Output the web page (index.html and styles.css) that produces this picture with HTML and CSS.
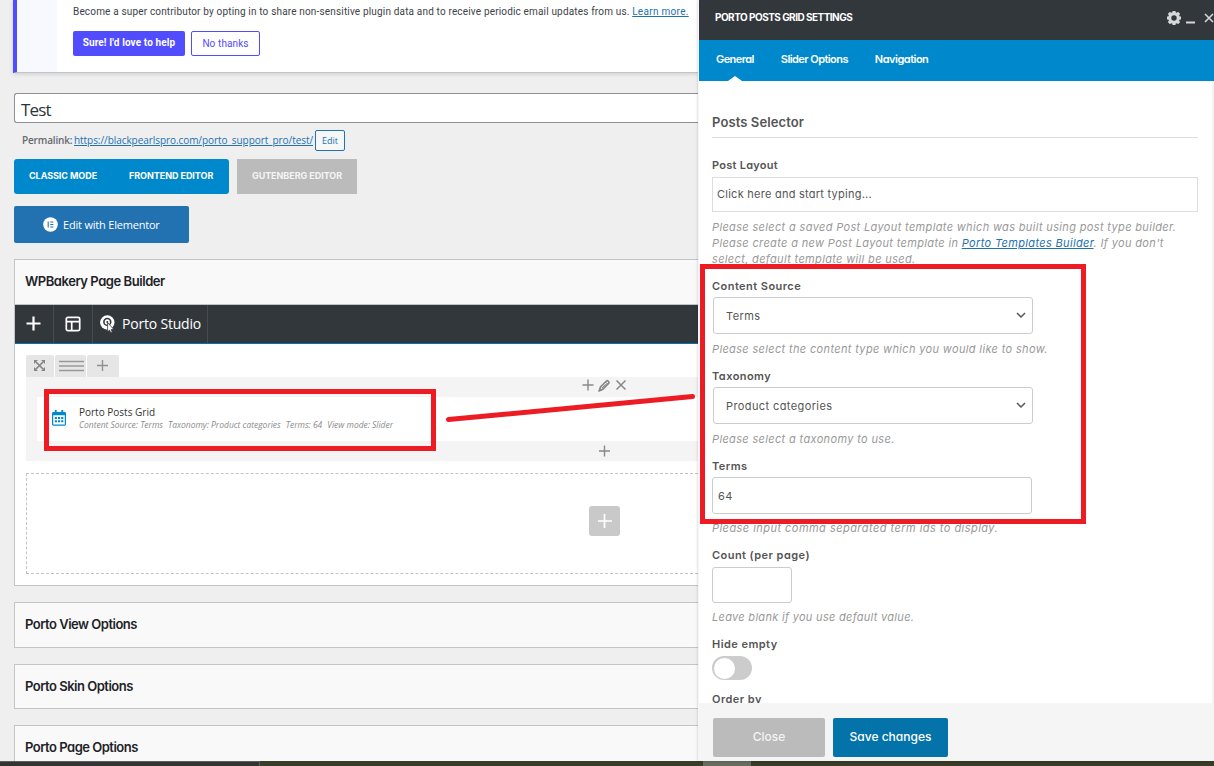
FILE: index.html
```html
<!DOCTYPE html>
<html lang="en">
<head>
    <meta charset="UTF-8">
    <meta name="viewport" content="width=device-width, initial-scale=1.0">
    <title>Edit Page - Test</title>
    <link rel="stylesheet" href="styles.css">
</head>
<body>
    <div class="screen">
        <div class="workspace">
            <main class="editor">
                <div class="notice">
                    <div class="notice-aside"></div>
                    <div class="notice-content">
                        <p>Become a super contributor by opting in to share non-sensitive plugin data and to receive periodic email updates from us. <a href="#">Learn more.</a></p>
                        <div class="notice-actions">
                            <button class="btn-help">Sure! I'd love to help</button>
                            <button class="btn-no">No thanks</button>
                        </div>
                    </div>
                </div>

                <div class="title-field">Test</div>

                <div class="permalink">
                    <strong>Permalink:</strong>
                    <a href="#">https://blackpearlspro.com/porto_support_pro/test/</a>
                    <button>Edit</button>
                </div>

                <div class="modes">
                    <div class="mode-group">
                        <span>CLASSIC MODE</span>
                        <span>FRONTEND EDITOR</span>
                    </div>
                    <div class="mode-disabled">GUTENBERG EDITOR</div>
                </div>

                <button class="elementor">
                    <svg width="15" height="15" viewBox="0 0 15 15">
                        <circle cx="7.5" cy="7.5" r="7.3" fill="#fff"/>
                        <path d="M5.2 4.5v6M7.2 5h3.2M7.2 7.5h3.2M7.2 10h3.2" stroke="#2271b1" stroke-width="1.1"/>
                    </svg>
                    <span>Edit with Elementor</span>
                </button>

                <section class="postbox builder">
                    <h2>WPBakery Page Builder</h2>
                    <nav class="builder-nav">
                        <a class="nav-item">
                            <svg width="16" height="16" viewBox="0 0 16 16"><path d="M7.5 .5v14M.5 7.5h14" stroke="#fff" stroke-width="2.2"/></svg>
                        </a>
                        <a class="nav-item">
                            <svg width="16" height="16" viewBox="0 0 16 16" fill="none" stroke="#fff" stroke-width="1.7"><rect x="1.3" y="1.3" width="13.4" height="13.4" rx="1.6"/><path d="M1 5.7h14M6.7 5.7v9"/></svg>
                        </a>
                        <a class="nav-item studio">
                            <svg width="16" height="20" viewBox="0 0 16 20">
                                <circle cx="7.3" cy="8.5" r="7.2" fill="#fff"/>
                                <circle cx="7.3" cy="7.9" r="3.4" fill="none" stroke="#32373c" stroke-width="1.6"/>
                                <circle cx="7.3" cy="7.9" r="1" fill="#32373c"/>
                                <path d="M7.6 8.6v9.2l2-1.7 1.1 2.6 1.6-.7-1.1-2.5h2.6z" fill="#fff" stroke="#32373c" stroke-width=".8"/>
                            </svg>
                            <span>Porto Studio</span>
                        </a>
                    </nav>
                    <div class="builder-body">
                        <div class="row-controls">
                            <span class="control move">
                                <svg width="11" height="11" viewBox="0 0 11 11"><path d="M2 2l7 7M9 2L2 9" stroke="#858585" stroke-width="1.7"/><path d="M0 0h4L0 4zM11 0v4L7 0zM0 11V7l4 4zM11 11H7l4-4z" fill="#858585"/></svg>
                            </span>
                            <span class="control layout">
                                <svg width="25" height="12" viewBox="0 0 25 12"><path d="M0 1.5h25M0 6h25M0 10.5h25" stroke="#999" stroke-width="1.3"/></svg>
                            </span>
                            <span class="control add">
                                <svg width="12" height="12" viewBox="0 0 12 12"><path d="M5.5 0v11M0 5.500h11" stroke="#919191" stroke-width="1.400"/></svg>
                            </span>
                        </div>
                        <div class="row">
                            <div class="column-controls">
                                <svg width="12" height="12" viewBox="0 0 12 12"><path d="M6 .5v11M.5 6h11" stroke="#888" stroke-width="1.4"/></svg>
                                <svg width="13" height="13" viewBox="0 0 13 13"><path d="M1.5 11.5l1-3.500 6-6c1-1 3.200 1 2.300 2.200l-6 6z" fill="none" stroke="#888" stroke-width="1.700"/><path d="M7.400 3l2.600 2.600M4 9l3.800-3.800M1 12l.6-2.400 1.800 1.800z" stroke="#888" fill="#888"/></svg>
                                <svg width="12" height="12" viewBox="0 0 12 12"><path d="M1.500 1.500l9 9M10.500 1.500l-9 9" stroke="#888" stroke-width="1.500"/></svg>
                            </div>
                            <div class="element">
                                <svg width="14" height="16" viewBox="0 0 15 17">
                                    <path d="M3 0h2v2h5V0h2v2h1.500A1.500 1.500 0 0 1 15 3.500v11.800a1.500 1.500 0 0 1-1.500 1.500h-12A1.500 1.500 0 0 1 0 15.300V3.500A1.500 1.500 0 0 1 1.500 2H3zM1.300 5.500v9.900h12.400V5.500z" fill="#0088cc" fill-rule="evenodd"/>
                                    <path d="M3 7.500h2.300v2H3zM6.400 7.500h2.300v2H6.400zM9.800 7.500h2.300v2H9.800zM3 11h2.300v2H3zM6.400 11h2.300v2H6.400zM9.800 11h2.300v2H9.800z" fill="#0088cc"/>
                                </svg>
                                <div>
                                    <h4>Porto Posts Grid</h4>
                                    <p class="params"><span>Content Source: Terms</span><span>Taxonomy: Product categories</span><span>Terms: 64</span><span>View mode: Slider</span></p>
                                </div>
                            </div>
                            <div class="column-bottom">
                                <svg width="12" height="12" viewBox="0 0 12 12"><path d="M6.500 .5v11M1 6h11" stroke="#888" stroke-width="1.400"/></svg>
                            </div>
                        </div>
                        <div class="empty-row">
                            <span class="add-element">
                                <svg width="14" height="14" viewBox="0 0 14 14"><path d="M6.500 0v14M0 7h14" stroke="#fff" stroke-width="1.700"/></svg>
                            </span>
                        </div>
                    </div>
                </section>

                <section class="postbox"><h2>Porto View Options</h2></section>
                <section class="postbox skin"><h2>Porto Skin Options</h2></section>
                <section class="postbox"><h2>Porto Page Options</h2></section>
            </main>

            <aside class="panel">
                <header class="panel-header">
                    <h3>PORTO POSTS GRID SETTINGS</h3>
                    <div class="panel-tools">
                        <svg width="14" height="14" viewBox="0 0 15 15"><circle cx="7.500" cy="7.500" r="4.600" fill="none" stroke="#d6d7d8" stroke-width="3.400"/><path d="M7.500 0v3M7.500 12v3M0 7.500h3M12 7.500h3M2 2l2 2M11 11l2 2M13 2l-2 2M4 11l-2 2" stroke="#d6d7d8" stroke-width="3.400"/></svg>
                        <svg class="minimize" width="9" height="15" viewBox="0 0 9 15"><path d="M0 11.500h9" stroke="#d6d7d8" stroke-width="2"/></svg>
                        <svg class="close" width="10" height="10" viewBox="0 0 10 10"><path d="M1 1l8 8M9 1L1 9" stroke="#d6d7d8" stroke-width="1.600"/></svg>
                    </div>
                </header>
                <nav class="tabs">
                    <a class="tab active">General</a>
                    <a class="tab">Slider Options</a>
                    <a class="tab navigation">Navigation</a>
                </nav>
                <div class="panel-body">
                    <h4 class="group-title">Posts Selector</h4>

                    <div class="field post-layout">
                        <label>Post Layout</label>
                        <div class="input wide">Click here and start typing...</div>
                        <p class="help">Please select a saved Post Layout template which was built using post type builder.<br>Please create a new Post Layout template in <a href="#">Porto Templates Builder</a>. If you don't<br>select, default template will be used.</p>
                    </div>

                    <div class="field source">
                        <label>Content Source</label>
                        <div class="input select">Terms<svg width="10" height="7" viewBox="0 0 10 7"><path d="M1 1l4 4 4-4" fill="none" stroke="#555" stroke-width="1.500"/></svg></div>
                        <p class="help">Please select the content type which you would like to show.</p>
                    </div>

                    <div class="field taxonomy">
                        <label>Taxonomy</label>
                        <div class="input select">Product categories<svg width="10" height="7" viewBox="0 0 10 7"><path d="M1 1l4 4 4-4" fill="none" stroke="#555" stroke-width="1.500"/></svg></div>
                        <p class="help">Please select a taxonomy to use.</p>
                    </div>

                    <div class="field terms">
                        <label>Terms</label>
                        <div class="input text">64</div>
                        <p class="help">Please input comma separated term ids to display.</p>
                    </div>

                    <div class="field count">
                        <label>Count (per page)</label>
                        <div class="input small"></div>
                        <p class="help">Leave blank if you use default value.</p>
                    </div>

                    <div class="field hide-empty">
                        <label>Hide empty</label>
                        <div class="toggle"></div>
                    </div>

                    <div class="field">
                        <label>Order by</label>
                    </div>
                </div>
                <footer class="panel-footer">
                    <button class="btn-close">Close</button>
                    <button class="btn-save">Save changes</button>
                </footer>
            </aside>
        </div>
        <div class="taskbar">
            <div class="search"></div>
            <div class="active-app"></div>
        </div>

        <!-- annotations over the page -->
        <svg class="marks" width="1214" height="766" viewBox="0 0 1214 766" fill="none" stroke="#ed1c24" stroke-width="5">
            <rect x="46.500" y="391.500" width="387" height="57"/>
            <rect x="702.500" y="266.500" width="381" height="255"/>
            <path d="M448.500 419.500L692.500 396.500" stroke-linecap="round"/>
        </svg>
    </div>
</body>
</html>
```

FILE: styles.css
```css
* {
    box-sizing: border-box;
}

body {
    margin: 0;
    font-family: "Open Sans", "Noto Sans", sans-serif;
    background: #f0f0f1;
    color: #3c434a;
}

h2, h3, h4, p {
    margin: 0;
}

svg {
    flex: none;
    display: block;
}

button {
    border: none;
    padding: 0;
    font-family: inherit;
}

a {
    color: #2271b1;
}

.screen {
    position: relative;
    width: 1214px;
    height: 766px;
    overflow: hidden;
    white-space: nowrap;
}

.workspace {
    display: flex;
    height: 761px;
}

/* Editor */
.editor {
    width: 698px;
    height: 761px;
    padding-left: 14px;
    overflow: hidden;
    background: #efefef;
}

.notice {
    display: flex;
    height: 73px;
    margin-left: -1px;
    background: #fff;
    border-left: 4px solid #524cff;
    border-bottom: 1px solid #c3c4c7;
    box-shadow: 0 1px 4px rgba(0, 0, 0, 0.15);
    font-family: Roboto, sans-serif;
}

.notice-aside {
    width: 40px;
    background: #f8f9ff;
}

.notice-content {
    padding: 4px 0 0 16px;
}

.notice-content p {
    height: 16px;
    font-size: 10px;
    line-height: 16px;
    letter-spacing: 0.165px;
}

.notice-content a {
    letter-spacing: 0.3px;
}

.notice-actions {
    display: flex;
    gap: 6px;
    margin-top: 11px;
}

.btn-help,
.btn-no {
    height: 25px;
    border-radius: 2px;
    font-size: 10px;
}

.btn-help {
    width: 112px;
    padding-bottom: 2px;
    background: #524cff;
    color: #fff;
    font-weight: 700;
    letter-spacing: 0.12px;
}

.btn-no {
    width: 69px;
    background: #fff;
    border: 1px solid #524cff;
    color: #524cff;
    letter-spacing: 0.1px;
}

.title-field {
    display: flex;
    align-items: center;
    height: 30px;
    margin-top: 20px;
    padding: 2px 0 0 6px;
    background: #fff;
    border: 1px solid #8c8f94;
    border-right: none;
    border-radius: 3px 0 0 3px;
    font-size: 17px;
    letter-spacing: -0.8px;
    color: #2c3338;
}

.permalink {
    display: flex;
    align-items: center;
    height: 21px;
    margin-top: 7px;
    padding-left: 8px;
    font-size: 10px;
    line-height: 14px;
    color: #646970;
}

.permalink strong {
    width: 52px;
    padding-bottom: 2px;
    font-weight: 600;
    letter-spacing: -0.15px;
}

.permalink a {
    width: 241px;
    padding-bottom: 2px;
    letter-spacing: -0.06px;
}

.permalink button {
    width: 30px;
    height: 21px;
    border: 1px solid #2271b1;
    border-radius: 2px;
    background: #f6f7f7;
    color: #2271b1;
    font-size: 9px;
}

.modes {
    display: flex;
    gap: 8px;
    margin-top: 8px;
    font-family: Inter, sans-serif;
    font-size: 9px;
    font-weight: 700;
    letter-spacing: -0.05px;
    color: #fff;
}

.mode-group {
    display: flex;
    align-items: center;
    width: 215px;
    height: 35px;
    padding: 0 0 2px 15px;
    background: #0088cc;
    border-radius: 3px;
}

.mode-group span {
    width: 100px;
}

.mode-disabled {
    display: flex;
    align-items: center;
    justify-content: center;
    width: 120px;
    height: 35px;
    padding-bottom: 2px;
    background: #bbb;
    color: #f4f4f4;
}

.elementor {
    display: flex;
    align-items: center;
    gap: 5px;
    width: 175px;
    height: 37px;
    margin-top: 12px;
    padding-left: 29px;
    background: #2271b1;
    border-radius: 2px;
    color: #fff;
    font-size: 11px;
    letter-spacing: -0.2px;
}

/* Meta boxes */
.postbox {
    height: 46px;
    margin-bottom: 16px;
    background: #f9f9f9;
    border: 1px solid #c3c4c7;
    border-right: none;
}

.postbox.skin {
    height: 45px;
}

.postbox h2 {
    display: flex;
    align-items: center;
    height: 44px;
    padding: 0 0 2px 10px;
    font-family: Inter, sans-serif;
    font-size: 13px;
    font-weight: 600;
    letter-spacing: -0.5px;
    color: #1d2327;
    font-feature-settings: "cv11";
}

.postbox.builder {
    height: 327px;
    margin-top: 16px;
    background: #fff;
}

.postbox.builder h2 {
    height: 45px;
    background: #f9f9f9;
    border-bottom: 1px solid #c3c4c7;
    letter-spacing: -0.45px;
}

.builder-nav {
    display: flex;
    height: 39px;
    background: #32373c;
    border-bottom: 1px solid #0073aa;
}

.nav-item {
    display: flex;
    align-items: center;
    justify-content: center;
    width: 39px;
    border-right: 1px solid #464b50;
    color: #fff;
    font-size: 14px;
}

.nav-item.studio {
    justify-content: flex-start;
    gap: 6px;
    width: 115px;
    padding-left: 7px;
    letter-spacing: -0.2px;
}

.studio span {
    padding-bottom: 2px;
}

.builder-body {
    padding: 11px 0 0 11px;
}

.row-controls {
    display: flex;
    gap: 1px;
    height: 22px;
}

.control {
    display: flex;
    align-items: center;
    justify-content: center;
    width: 28px;
    background: #e6e6e6;
    border-radius: 2px 2px 0 0;
}

.control.move {
    padding: 0 1px 1px 0;
}

.control.layout {
    width: 31px;
    padding: 0 0 1px 2px;
}

.control.add {
    width: 32px;
}

.row {
    height: 84px;
    padding-left: 11px;
    background: #f4f4f4;
}

.column-controls {
    display: flex;
    align-items: center;
    gap: 4px;
    height: 20px;
    padding: 0 0 4px 545px;
}

.element {
    display: flex;
    align-items: center;
    gap: 13px;
    height: 44px;
    padding: 0 0 2px 15px;
    background: #fff;
}

.element h4 {
    height: 13px;
    font-size: 10px;
    line-height: 13px;
    font-weight: 500;
    color: #333;
}

.params {
    display: flex;
    gap: 5px;
    height: 12px;
    font-size: 8.5px;
    line-height: 12px;
    font-style: italic;
    letter-spacing: -0.015px;
    color: #8c8c8c;
}

.column-bottom {
    display: flex;
    align-items: center;
    height: 20px;
    padding-left: 561px;
}

.empty-row {
    display: flex;
    align-items: center;
    height: 101px;
    margin-top: 12px;
    padding: 0 0 6px 562px;
    border: 1px dashed #c4c4c4;
    border-right: none;
}

.add-element {
    display: flex;
    align-items: center;
    justify-content: center;
    width: 31px;
    height: 30px;
    background: #c9c9c9;
    border-radius: 3px;
}

/* Settings panel */
.panel {
    display: flex;
    flex-direction: column;
    width: 516px;
    height: 761px;
    border-left: 1px solid #f5f5f5;
    background: #fff;
    font-family: Inter, sans-serif;
    font-feature-settings: "cv11";
    box-shadow: 0 0 3px rgba(0, 0, 0, 0.2);
    z-index: 1;
}

.panel-header {
    display: flex;
    justify-content: space-between;
    height: 40px;
    padding-left: 16px;
    background: #32373c;
    color: #fff;
}

.panel-header h3 {
    font-size: 10px;
    line-height: 35px;
    font-weight: 700;
    letter-spacing: -0.53px;
}

.panel-tools {
    display: flex;
    align-items: center;
    gap: 5px;
    height: 36px;
}

.panel-tools .close {
    margin-left: 4px;
}

.tabs {
    display: flex;
    gap: 27px;
    height: 41px;
    padding-left: 17px;
    background: #0088cc;
    font-size: 11px;
    font-weight: 600;
    line-height: 38px;
    letter-spacing: -0.57px;
}

.tab {
    color: #fff;
}

.tab.active {
    display: flex;
    flex-direction: column;
    align-items: center;
    height: 41px;
}

.tab.active::after {
    content: "";
    margin-top: -2px;
    border: 7px solid transparent;
    border-top: none;
    border-bottom: 5px solid #fff;
}

.tab.navigation {
    letter-spacing: -0.5px;
}

.panel-body {
    height: 622px;
    padding: 28px 14px 0 13px;
    border-right: 2px solid #f3f3f3;
    overflow: hidden;
    color: #555;
}

.group-title {
    height: 29px;
    margin-bottom: 19px;
    border-bottom: 1px solid #ddd;
    font-size: 13px;
    line-height: 27px;
    font-weight: 600;
    letter-spacing: 0.1px;
}

.field label {
    display: block;
    height: 20px;
    font-size: 11px;
    line-height: 16px;
    font-weight: 600;
    letter-spacing: 0.45px;
}

.field.post-layout {
    height: 121px;
}

.field.post-layout label {
    letter-spacing: 0.25px;
}

.field.source,
.field.taxonomy {
    height: 90px;
}

.field.terms {
    height: 89px;
}

.source label,
.taxonomy label,
.terms label {
    height: 19px;
}

.field.count {
    height: 89px;
}

.field.hide-empty {
    height: 55px;
}

.input {
    display: flex;
    align-items: center;
    height: 37px;
    border: 1px solid #ccc;
    border-radius: 3px;
    font-size: 11px;
    letter-spacing: 0.4px;
    color: #555;
}

.input.wide {
    height: 35px;
    padding: 0 0 2px 4px;
    border-color: #ddd;
    border-radius: 0;
    letter-spacing: 0.25px;
}

.input.select {
    justify-content: space-between;
    width: 320px;
    margin-left: 1px;
    padding: 0 6px 0 12px;
}

.input.text {
    width: 320px;
    padding-left: 5px;
}

.input.small {
    width: 80px;
    height: 36px;
}

.help {
    margin-top: 7px;
    font-size: 11px;
    line-height: 16px;
    font-style: italic;
    letter-spacing: 0.35px;
    color: #999;
}

.text + .help,
.small + .help {
    margin-top: 6px;
}

.terms .help {
    letter-spacing: 0.46px;
}

.count .help {
    letter-spacing: 0.3px;
}

.toggle {
    display: flex;
    align-items: center;
    width: 40px;
    height: 24px;
    padding-left: 2px;
    background: #ccc;
    border-radius: 12px;
}

.toggle::before {
    content: "";
    width: 21px;
    height: 21px;
    background: #fff;
    border-radius: 50%;
}

.panel-footer {
    display: flex;
    gap: 8px;
    height: 58px;
    padding: 15px 0 0 14px;
    background: #f5f5f5;
}

.panel-footer button {
    height: 39px;
    padding-bottom: 2px;
    border-radius: 2px;
    color: #fff;
    font-size: 12px;
    font-weight: 500;
    font-feature-settings: "cv11";
}

.panel-footer .btn-close {
    width: 112px;
    background: #bbb;
    color: #f4f4f4;
}

.panel-footer .btn-save {
    width: 115px;
    background: #0473aa;
}

/* Desktop taskbar */
.taskbar {
    display: flex;
    height: 5px;
    background: #383c29;
}

.search {
    width: 260px;
    margin-right: 443px;
    background: #333;
    border-top: 1px solid #5c5c5c;
    border-right: 1px solid #5c5c5c;
}

.active-app {
    width: 48px;
    background: #676c5c;
}

.marks {
    position: absolute;
    top: 0;
    left: 0;
    z-index: 2;
}
```
